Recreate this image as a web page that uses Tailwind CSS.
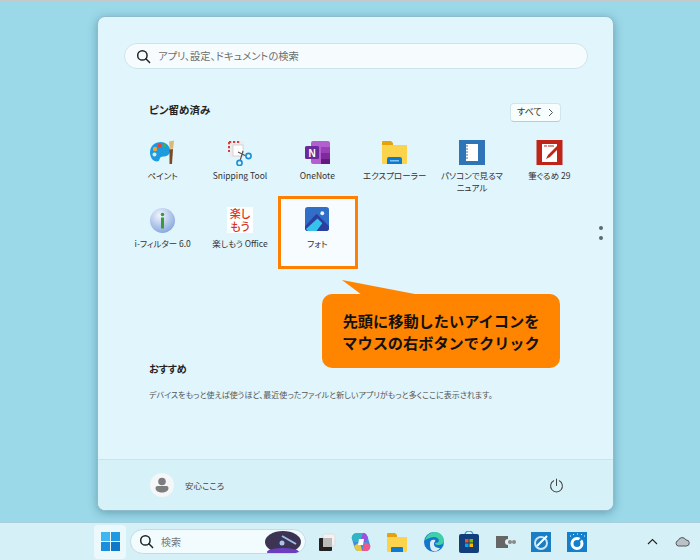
<!doctype html>
<html lang="ja"><head><meta charset="utf-8"><script src="https://cdn.jsdelivr.net/npm/@tailwindcss/browser@4"></script></head>
<body class="m-0">
<div class="relative w-[700px] h-[560px] overflow-hidden flex flex-col bg-[#9bd9e9] border-t border-[#c4c8ca] [font-feature-settings:'palt'] font-['Noto_Sans_CJK_JP','Noto_Sans',sans-serif]">
  <div class="flex-1 pt-[15px] pl-[97px]">
    <div class="relative w-[517px] h-[495px] rounded-lg bg-[#e1f5fc] border border-[#8fbccb] shadow-[0_2px_10px_rgba(40,90,110,0.45)] flex flex-col overflow-hidden">
      <div class="flex-1 flex flex-col">
        <div class="mt-[26px] ml-[26px] w-[464px] h-[26px] rounded-full bg-[#f6fcfe] border border-[#cfe3ea] flex items-center pl-[11px] gap-[7px]">
          <svg width="15" height="15" viewBox="0 0 16 16" fill="none" stroke="#222" stroke-width="1.6"><circle cx="6.8" cy="6.800" r="5"/><path d="M10.500 10.500L14.500 14.500" stroke-linecap="round"/></svg>
          <span class="text-[10.300px] text-[#6e6e6e]">アプリ、設定、ドキュメントの検索</span>
        </div>
        <div class="mt-[33px] pl-[51px] pr-[52px] flex items-center justify-between h-[20px]">
          <span class="text-[10.500px] font-bold text-[#222] -mt-[4px]">ピン留め済み</span>
          <div class="w-[51px] h-[19px] rounded bg-[#f8fdfe] border border-[#d3e4ea] border-b-[#b5cdd6] flex items-center justify-between pl-[6px] pr-[6px] text-[9px] text-[#333]">すべて
            <svg width="7" height="9" viewBox="0 0 7 9" fill="none" stroke="#555" stroke-width="1"><path d="M2 1l3.500 3.500L2 8"/></svg>
          </div>
        </div>
        <div class="mt-[15px] ml-[26px] w-[464px] grid grid-cols-6 auto-rows-[67.500px] text-[8.500px] text-[#333] text-center leading-[12px]">
          <div class="flex flex-col items-center pt-[2px]">
            <svg width="27" height="27" viewBox="0 0 27 27"><path d="M12 3C6 3 1 7 1 13.500c0 5 3 9 7 9 3 0 2-3 4-4.500 3-1 6 0 8-3 2-3 1-3 1-5-1-4-5-7-9-7z" fill="#1d9be0"/><circle cx="6" cy="10" r="2.200" fill="#f2a830"/><circle cx="10.500" cy="6.500" r="2" fill="#e8423f"/><circle cx="15.500" cy="6.500" r="2" fill="#3fb24f"/><circle cx="5.500" cy="15.500" r="2" fill="#d6e8f4"/><path d="M20 2.500l5-1-.8 8-3.400.5z" fill="#dcb878"/><path d="M20.500 10.500l3.500-.6L23 25h-2.500z" fill="#7a4a20"/></svg>
            <span class="mt-[3px]">ペイント</span>
          </div>
          <div class="flex flex-col items-center pt-[2px]">
            <svg width="27" height="27" viewBox="0 0 27 27"><rect x="3" y="2" width="15" height="16" fill="#ececec"/><rect x="7" y="6" width="10" height="11" fill="#fff" stroke="#ccc" stroke-width="0.800"/><path d="M3 3h11M3 3v10" stroke="#d83b3b" stroke-width="2" stroke-dasharray="2.200 1.800" fill="none"/><path d="M12 13l8 4M17 12l-3 10" stroke="#555" stroke-width="1.200"/><circle cx="22.500" cy="17" r="2.600" fill="none" stroke="#1b8fd6" stroke-width="1.600"/><circle cx="13.500" cy="24" r="2.600" fill="none" stroke="#1b8fd6" stroke-width="1.600"/></svg>
            <span class="mt-[3px] whitespace-nowrap">Snipping Tool</span>
          </div>
          <div class="flex flex-col items-center pt-[2px]">
            <svg width="27" height="27" viewBox="0 0 27 27"><rect x="7" y="2" width="19" height="23" rx="2" fill="#b45fd0"/><rect x="17" y="8" width="9" height="6" fill="#9a3fb8"/><rect x="17" y="14" width="9" height="6" fill="#7f2a9c"/><rect x="17" y="20" width="9" height="5" fill="#64197e"/><rect x="1" y="7" width="14" height="13" rx="1.500" fill="#6a2a9a"/><text x="8" y="17.500" font-size="10" font-weight="700" fill="#fff" text-anchor="middle" font-family="Liberation Sans">N</text></svg>
            <span class="mt-[3px]">OneNote</span>
          </div>
          <div class="flex flex-col items-center pt-[2px]">
            <svg width="27" height="27" viewBox="0 0 27 27"><path d="M1 3a1 1 0 011-1h8l2 2v4H1z" fill="#e5a20c"/><path d="M1 6h25v18a1 1 0 01-1 1H2a1 1 0 01-1-1z" fill="#fbd34d"/><path d="M6 25v-5a2 2 0 012-2h11a2 2 0 012 2v5z" fill="#0f7bd0"/><rect x="9" y="21" width="9" height="1.500" fill="#7cc4f2"/></svg>
            <span class="mt-[3px] whitespace-nowrap">エクスプローラー</span>
          </div>
          <div class="flex flex-col items-center pt-[2px]">
            <svg width="27" height="27" viewBox="0 0 27 27"><rect x="1" y="1" width="26" height="25" fill="#2f74b7"/><rect x="8" y="5" width="12" height="17" fill="#fff"/><path d="M7 7h3M7 10h3M7 13h3M7 16h3M7 19h3" stroke="#2f74b7" stroke-width="1"/></svg>
            <span class="mt-[3px] px-[5px]">パソコンで見るマニュアル</span>
          </div>
          <div class="flex flex-col items-center pt-[2px]">
            <svg width="27" height="27" viewBox="0 0 27 27"><rect x="0.500" y="1" width="26" height="25" fill="#bf2418"/><rect x="6" y="5" width="15" height="18" fill="#fff"/><path d="M8 7h3M12 7h6" stroke="#bf2418" stroke-width="1.200"/><path d="M10 20l2-4 9-9 2 2-9 9z" fill="#bf2418"/></svg>
            <span class="mt-[3px] whitespace-nowrap">筆ぐるめ 29</span>
          </div>
          <div class="flex flex-col items-center pt-[2px]">
            <svg width="27" height="27" viewBox="0 0 27 27"><defs><radialGradient id="g" cx="0.400" cy="0.300" r="0.800"><stop offset="0" stop-color="#f2f6fd"/><stop offset="1" stop-color="#7d9fdc"/></radialGradient></defs><circle cx="13.500" cy="13.500" r="12.500" fill="url(#g)"/><circle cx="13.500" cy="7.500" r="1.800" fill="#3b9b3b"/><rect x="12" y="10.500" width="3" height="11" fill="#3b9b3b"/></svg>
            <span class="mt-[3px] whitespace-nowrap">i-フィルター 6.0</span>
          </div>
          <div class="flex flex-col items-center pt-[2px]">
            <div class="w-[26px] h-[26px] mb-[1px] bg-white text-[#d6331c] text-[11px] font-medium leading-[13px] text-center">楽し<br>もう</div>
            <span class="mt-[3px] whitespace-nowrap">楽しもう Office</span>
          </div>
          <div class="relative flex flex-col items-center pt-[2px]">
            <div class="absolute left-[2px] right-[0px] -top-[7px] h-[68px] bg-[#f6fcff]"></div>
            <svg width="24" height="24" viewBox="0 0 25 25" class="relative"><rect width="25" height="25" rx="3" fill="#2f6fc8"/><circle cx="18" cy="6.500" r="2" fill="#e9f5ff"/><path d="M0 20L12 7l13 13v2a3 3 0 01-3 3H3a3 3 0 01-3-3z" fill="#2a3f9e"/><path d="M1 23l12-11 5 5-6 8H3z" fill="#35c3ee"/></svg>
            <span class="relative mt-[6px]">フォト</span>
          </div>
        </div>
        <div class="absolute right-[10px] top-[209px] flex flex-col gap-[6px]"><span class="w-[4px] h-[4px] rounded-full bg-[#5a6a70]"></span><span class="w-[4px] h-[4px] rounded-full bg-[#5a6a70]"></span></div>
        <div class="mt-[89px] ml-[51px] text-[10px] font-bold text-[#222] leading-[16px]">おすすめ</div>
        <div class="mt-[12px] ml-[51px] text-[8px] text-[#555] leading-[12px] whitespace-nowrap">デバイスをもっと使えば使うほど、最近使ったファイルと新しいアプリがもっと多くここに表示されます。</div>
      </div>
      <div class="h-[51px] bg-[#d7f1f9] border-t border-[#c9e4ec] flex items-center pl-[52px] pr-[49px]">
        <div class="w-[24px] h-[24px] rounded-full bg-[#f4f6f7] flex items-center justify-center">
          <svg width="14" height="16" viewBox="0 0 14 16" fill="#7d7d7d"><circle cx="7" cy="4.500" r="3.800"/><path d="M0.500 11a2 2 0 012-2h9a2 2 0 012 2c0 3-3 4.500-6.500 4.500S0.500 14 0.500 11z"/></svg>
        </div>
        <span class="ml-[11px] text-[8.500px] text-[#444]">安心こころ</span>
        <svg class="ml-auto" width="15" height="15" viewBox="0 0 16 16" fill="none" stroke="#444" stroke-width="1.100"><path d="M5 3a6.300 6.300 0 106 0M8 1v7" stroke-linecap="round"/></svg>
      </div>
    </div>
  </div>
  <div class="h-[38px] mt-[10px] bg-[#d6f0f8] border-t border-[#a9cfdb] flex items-center pl-[94px]">
    <div class="w-[32px] h-[34px] rounded bg-[#ebf8fc] flex items-center justify-center shrink-0">
      <svg width="19" height="19" viewBox="0 0 19 19"><rect width="9" height="9" fill="#3fb6ef"/><rect x="10" width="9" height="9" fill="#1e98e0"/><rect y="10" width="9" height="9" fill="#1a8fdb"/><rect x="10" y="10" width="9" height="9" fill="#0f78c8"/></svg>
    </div>
    <div class="relative ml-[4px] w-[176px] h-[25px] rounded-full bg-[#f2fbfe] border border-[#c3dce4] flex items-center pl-[8px] gap-[7px] shrink-0 overflow-hidden">
      <svg width="15" height="15" viewBox="0 0 16 16" fill="none" stroke="#222" stroke-width="1.600"><circle cx="6.800" cy="6.800" r="5"/><path d="M10.500 10.500L14.500 14.500" stroke-linecap="round"/></svg>
      <span class="text-[10px] text-[#777]">検索</span>
      <svg class="absolute right-[3px] top-[1px]" width="38" height="22" viewBox="0 0 38 22"><ellipse cx="19" cy="11" rx="18" ry="11" fill="#3c3452"/><path d="M18 5l14 8" stroke="#9cc0e8" stroke-width="2"/><circle cx="18" cy="12" r="2.500" fill="#a9c4f0"/><ellipse cx="19" cy="21" rx="16" ry="4" fill="#6b3fc0"/></svg>
    </div>
    <svg class="ml-[11px] shrink-0" width="20" height="20" viewBox="0 0 20 20"><rect x="6" y="2" width="12" height="12" rx="1" fill="#f2f2f2" stroke="#ddd"/><rect x="2" y="6" width="13" height="13" rx="1" fill="#222"/><rect x="6" y="6" width="9" height="9" fill="#bbb"/></svg>
    <svg class="ml-[13px] shrink-0" width="22" height="22" viewBox="0 0 22 22"><path d="M7 2h6c3 0 4 2 5 5l2 7c1 3-1 6-4 6H9c-3 0-4-2-5-5L2 8C1 5 4 2 7 2z" fill="#3c8fe8"/><path d="M2 8c-1-3 2-6 5-6h6l-3 9H4z" fill="#2fb5c5"/><path d="M4 15l6-4 2 9H9c-3 0-4-2-5-5z" fill="#e8c83c"/><path d="M10 11l3-9c3 0 4 2 5 5l-3 4z" fill="#a04fe0"/><path d="M15 11l5 3c1 3-1 6-4 6h-4z" fill="#f0588c"/><path d="M9 8h5l-1 6H8z" fill="#fff"/></svg>
    <svg class="ml-[15px] shrink-0" width="21" height="20" viewBox="0 0 21 20"><path d="M0 2a1 1 0 011-1h7l2 2v3H0z" fill="#e5a20c"/><path d="M0 5h20v14a1 1 0 01-1 1H1a1 1 0 01-1-1z" fill="#fbd34d"/><path d="M4 20v-4a1 1 0 011-1h10a1 1 0 011 1v4z" fill="#0f7bd0"/></svg>
    <svg class="ml-[16px] shrink-0" width="20" height="20" viewBox="0 0 20 20"><circle cx="10" cy="10" r="10" fill="#1277c9"/><path d="M1 8C3 2 8 0 11 0c5 0 9 4 9 9 0 3-3 4-6 4-2 0-3-1-3-2 3 0 4-1 4-3-1-2-3-3-5-3-4 0-8 3-9 3z" fill="#3fd0a8"/><path d="M6 11c0-3 3-4 5-3 1 1-1 2-1 4 0 3 3 4 6 4-2 3-5 4-7 3-3-1-3-5-3-8z" fill="#fff" opacity="0.850"/></svg>
    <svg class="ml-[15px] shrink-0" width="20" height="22" viewBox="0 0 20 22"><path d="M6 4a4 4 0 018 0" stroke="#2ba8d8" fill="none" stroke-width="1.500"/><rect y="3" width="20" height="19" rx="2" fill="#123f7c"/><rect x="6" y="8" width="3.500" height="3.500" fill="#f25022"/><rect x="10.500" y="8" width="3.500" height="3.500" fill="#7fba00"/><rect x="6" y="12.500" width="3.500" height="3.500" fill="#00a4ef"/><rect x="10.500" y="12.500" width="3.500" height="3.500" fill="#ffb900"/></svg>
    <svg class="ml-[17px] shrink-0" width="20" height="14" viewBox="0 0 20 14"><path d="M0 1h12v3a3 3 0 000 6v3H0z" fill="#666"/><circle cx="11" cy="7" r="1.200" fill="#eee"/><circle cx="14" cy="7" r="2" fill="#888"/><circle cx="18" cy="7" r="2" fill="#888"/></svg>
    <svg class="ml-[15px] shrink-0" width="20" height="20" viewBox="0 0 20 20"><rect width="20" height="20" fill="#1a7ec4"/><circle cx="10" cy="11" r="6" fill="none" stroke="#cfe6f5" stroke-width="2"/><path d="M6 14L16 4" stroke="#fff" stroke-width="2"/></svg>
    <svg class="ml-[16px] shrink-0" width="20" height="20" viewBox="0 0 20 20"><rect width="20" height="20" fill="#1480cc"/><path d="M3 4h1M6 2.500h1M10 2h1M14 2.500h1M17 4h1" stroke="#fff"/><circle cx="10" cy="11.500" r="5" fill="none" stroke="#fff" stroke-width="3"/><path d="M10 11l5-5" stroke="#1480cc" stroke-width="2"/></svg>
    <svg class="ml-[60px] shrink-0" width="11" height="7" viewBox="0 0 11 7" fill="none" stroke="#222" stroke-width="1.100"><path d="M1 6l4.500-4.500L10 6"/></svg>
    <svg class="ml-[17px] shrink-0" width="15" height="11" viewBox="0 0 15 11" fill="#b9c3c7" stroke="#555" stroke-width="1"><path d="M3.500 10a2.800 2.800 0 01-.3-5.500A4.200 4.200 0 0111 4a3 3 0 01.5 6z"/></svg>
  </div>
  <div class="absolute left-[278px] top-[195px] w-[80px] h-[73px] border-[3px] border-[#ff8000]"></div>
  <div class="absolute left-[322px] top-[293px] w-[238px] h-[74px] rounded-[10px] bg-[#ff8400] flex items-center justify-center text-center text-[15.200px] leading-[22px] font-bold text-[#111] [font-feature-settings:normal]">先頭に移動したいアイコンを<br>マウスの右ボタンでクリック</div>
  <svg class="absolute left-[340px] top-[279px]" width="82" height="16" viewBox="0 0 82 16"><path d="M2 0L22 15h58z" fill="#ff8400"/></svg>
</div>
</body></html>
